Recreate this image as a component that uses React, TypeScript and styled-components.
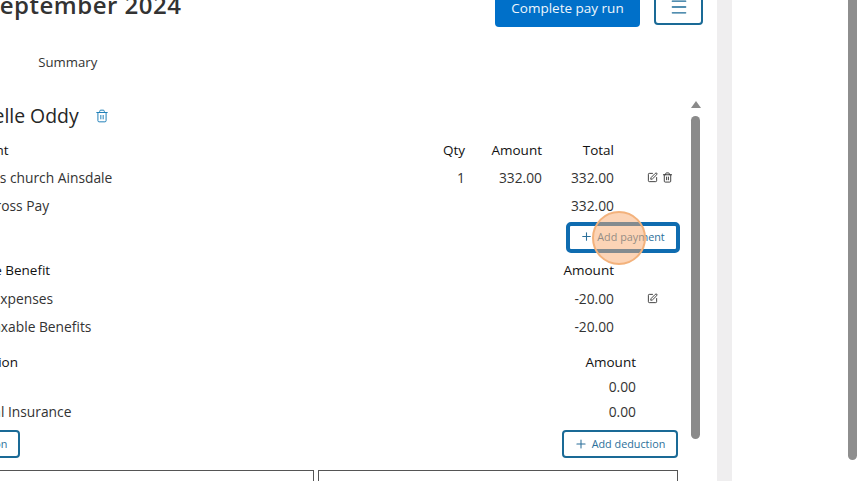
import React from 'react';
import styled, { createGlobalStyle } from 'styled-components';
import { Menu, Plus, SquarePen, Trash2 } from 'lucide-react';

const GlobalStyle = createGlobalStyle`
  html, body {
    margin: 0;
    height: 100%;
    overflow: hidden;
    background: #fff;
    font-family: 'Open Sans', 'Liberation Sans', sans-serif;
    color: #2d2d2d;
  }
`;

const payments = [
  { name: "St Luke's church Ainsdale", qty: '1', amount: '332.00', total: '332.00', edit: true, remove: true },
  { name: 'Total Gross Pay', qty: '', amount: '', total: '332.00', edit: false, remove: false },
];

const benefits = [
  { name: 'Travel Expenses', total: '-20.00', edit: true },
  { name: 'Total Taxable Benefits', total: '-20.00', edit: false },
];

const deductions = [
  { name: 'PAYE', amount: '0.00' },
  { name: 'National Insurance', amount: '0.00' },
];

const App: React.FC = () => {
  return (
    <Page>
      <GlobalStyle />
      <Main>
        <Header>
          <Title>September 2024</Title>
          <HeaderActions>
            <PrimaryButton>Complete pay run</PrimaryButton>
            <MenuButton aria-label="Menu">
              <Menu size={20} strokeWidth={1.6} />
            </MenuButton>
          </HeaderActions>
        </Header>
        <Tabs>
          <Tab>Payslips</Tab>
          <Tab>Summary</Tab>
        </Tabs>
        <Panel>
          <ScrollArea>
            <NameRow>
              <EmployeeName>Michelle Oddy</EmployeeName>
              <Trash2 size={14} color="#1f7fb8" strokeWidth={1.7} />
            </NameRow>

            <PaymentRow $bold>
              <HeadCell>Payment</HeadCell>
              <NumberCell>Qty</NumberCell>
              <NumberCell>Amount</NumberCell>
              <NumberCell>Total</NumberCell>
              <span />
            </PaymentRow>
            {payments.map((row) => (
              <PaymentRow key={row.name}>
                <Cell>{row.name}</Cell>
                <NumberCell>{row.qty}</NumberCell>
                <NumberCell>{row.amount}</NumberCell>
                <NumberCell>{row.total}</NumberCell>
                <RowIcons>
                  {row.edit && <SquarePen size={11} strokeWidth={2} />}
                  {row.remove && <Trash2 size={11} strokeWidth={2} />}
                </RowIcons>
              </PaymentRow>
            ))}
            <ButtonLine>
              <FocusedButton>
                <Plus size={13} strokeWidth={2} />
                Add payment
                <ClickMarker />
              </FocusedButton>
            </ButtonLine>

            <BenefitHead $bold>
              <HeadCell>Taxable Benefit</HeadCell>
              <span />
              <span />
              <NumberCell>Amount</NumberCell>
              <span />
            </BenefitHead>
            {benefits.map((row) => (
              <PaymentRow key={row.name}>
                <Cell>{row.name}</Cell>
                <span />
                <span />
                <NumberCell>{row.total}</NumberCell>
                <RowIcons>{row.edit && <SquarePen size={11} strokeWidth={2} />}</RowIcons>
              </PaymentRow>
            ))}

            <DeductionHead>
              <HeadCell>Deduction</HeadCell>
              <NumberCell>Amount</NumberCell>
            </DeductionHead>
            {deductions.map((row) => (
              <DeductionRow key={row.name}>
                <Cell>{row.name}</Cell>
                <NumberCell>{row.amount}</NumberCell>
              </DeductionRow>
            ))}

            <DeductionActions>
              <OutlineButton>
                <Plus size={14} strokeWidth={1.8} />
                Add deduction
              </OutlineButton>
              <OutlineButton>
                <Plus size={14} strokeWidth={1.8} />
                Add deduction
              </OutlineButton>
            </DeductionActions>

            <Boxes>
              <Box />
              <Box />
            </Boxes>
          </ScrollArea>
          <PanelScrollbar>
            <ArrowUp />
            <PanelThumb />
          </PanelScrollbar>
        </Panel>
      </Main>
      <Gutter />
      <Side />
      <PageScrollbar>
        <PageThumb />
      </PageScrollbar>
    </Page>
  );
};

export default App;

const Page = styled.div`
  display: flex;
  width: 860px;
  height: 481px;
  overflow: hidden;
`;

const Main = styled.div`
  width: 717px;
  flex: none;
  overflow: hidden;
  display: flex;
  flex-direction: column;
`;

const Header = styled.div`
  display: flex;
  justify-content: space-between;
  align-items: flex-start;
  height: 38px;
  margin-top: -11px;
  margin-left: -14px;
  padding-right: 14px;
`;

const Title = styled.h1`
  margin: 0;
  font-size: 24px;
  line-height: 32px;
  font-weight: 600;
  color: #333;
  letter-spacing: 0.5px;
`;

const HeaderActions = styled.div`
  display: flex;
  align-items: flex-start;
  gap: 14px;
`;

const PrimaryButton = styled.button`
  width: 145px;
  height: 38px;
  border: 0;
  border-radius: 4px;
  background: #0070c9;
  color: #eef6fc;
  font: 400 13.5px 'Open Sans', sans-serif;
`;

const MenuButton = styled.button`
  width: 49px;
  height: 36px;
  border: 2px solid #1a6a96;
  border-radius: 4px;
  background: #fff;
  color: #1a6a96;
  display: flex;
  align-items: center;
  justify-content: center;
  padding: 0;
`;

const Tabs = styled.div`
  display: flex;
  gap: 45px;
  margin-top: 25px;
  margin-left: -56px;
  height: 20px;
  align-items: center;
`;

const Tab = styled.span`
  font-size: 13.2px;
  line-height: 20px;
  color: #333;
`;

const Panel = styled.div`
  display: flex;
  flex: 1;
  min-height: 0;
  margin-top: 28px;
`;

const ScrollArea = styled.div`
  width: 691px;
  flex: none;
  margin-left: -50px;
  min-width: 0;
`;

const NameRow = styled.div`
  display: flex;
  align-items: center;
  gap: 16px;
  height: 31px;
  margin-bottom: 5px;
`;

const EmployeeName = styled.h2`
  margin: 0;
  font-size: 19.4px;
  font-weight: 400;
  color: #262626;
`;

const PaymentRow = styled.div<{ $bold?: boolean }>`
  display: grid;
  grid-template-columns: 1fr 40px 77px 72px 64px;
  width: 728px;
  height: 28px;
  box-sizing: border-box;
  padding-bottom: ${(p) => (p.$bold ? 0 : '1px')};
  align-items: center;
  font-size: ${(p) => (p.$bold ? '13.5px' : '13.8px')};
  font-weight: ${(p) => (p.$bold ? 500 : 400)};
  color: ${(p) => (p.$bold ? '#111' : '#333')};
`;

const BenefitHead = styled(PaymentRow)`
  margin-bottom: 1px;
`;

const Cell = styled.span`
  white-space: nowrap;
`;

const HeadCell = styled(Cell)`
  margin-left: 3px;
`;

const NumberCell = styled.span`
  text-align: right;
`;

const RowIcons = styled.span`
  display: flex;
  gap: 4px;
  padding-left: 33px;
  color: #333;
`;

const ButtonLine = styled.div`
  width: 730px;
  height: 36px;
  padding-bottom: 2px;
  box-sizing: border-box;
  display: flex;
  justify-content: flex-end;
  align-items: center;
`;

const OutlineButton = styled.button`
  display: flex;
  align-items: center;
  justify-content: center;
  gap: 4px;
  width: 116px;
  height: 28px;
  padding: 0 1px 1px 0;
  border: 2px solid #1a6a96;
  border-radius: 4px;
  background: #fff;
  color: #2b6f9a;
  font: 400 10.8px 'Open Sans', sans-serif;
`;

const FocusedButton = styled(OutlineButton)`
  position: relative;
  width: 114px;
  height: 31px;
  border-width: 4px;
  border-color: #0f6cb0;
  border-radius: 5px;
`;

const ClickMarker = styled.span`
  position: absolute;
  left: 22px;
  top: -15px;
  width: 50px;
  height: 50px;
  border: 2px solid #f3b27c;
  border-radius: 50%;
  background: rgba(250, 170, 110, 0.5);
`;

const DeductionHead = styled.div`
  display: grid;
  grid-template-columns: 1fr 92px;
  width: 686px;
  height: 26px;
  margin-top: 8px;
  margin-bottom: -1px;
  align-items: center;
  font-size: 13.5px;
  font-weight: 500;
  color: #111;
`;

const DeductionRow = styled(DeductionHead)`
  height: 25px;
  margin-top: 0;
  margin-bottom: 0;
  font-size: 13.8px;
  font-weight: 400;
  color: #333;
`;

const DeductionActions = styled.div`
  display: flex;
  justify-content: space-between;
  width: 774px;
  margin-left: -46px;
  margin-top: 6px;
`;

const Boxes = styled.div`
  display: grid;
  grid-template-columns: 364px 360px;
  gap: 4px;
  width: 728px;
  margin-top: 12px;
`;

const Box = styled.div`
  height: 60px;
  border: 1px solid #555;
  box-sizing: border-box;
`;

const PanelScrollbar = styled.div`
  width: 9px;
  flex: none;
  margin-left: 50px;
  display: flex;
  flex-direction: column;
  align-items: center;
`;

const ArrowUp = styled.div`
  margin-top: 1px;
  border-left: 5px solid transparent;
  border-right: 5px solid transparent;
  border-bottom: 7px solid #8a8a8a;
`;

const PanelThumb = styled.div`
  width: 9px;
  height: 323px;
  margin-top: 8px;
  border-radius: 5px;
  background: #8a8a8a;
`;

const Gutter = styled.div`
  width: 15px;
  flex: none;
  background: #efeeef;
`;

const Side = styled.div`
  width: 116px;
  flex: none;
  background: #fff;
`;

const PageScrollbar = styled.div`
  width: 9px;
  flex: none;
`;

const PageThumb = styled.div`
  height: 460px;
  border-radius: 0 0 5px 5px;
  background: #8e8e8e;
`;
